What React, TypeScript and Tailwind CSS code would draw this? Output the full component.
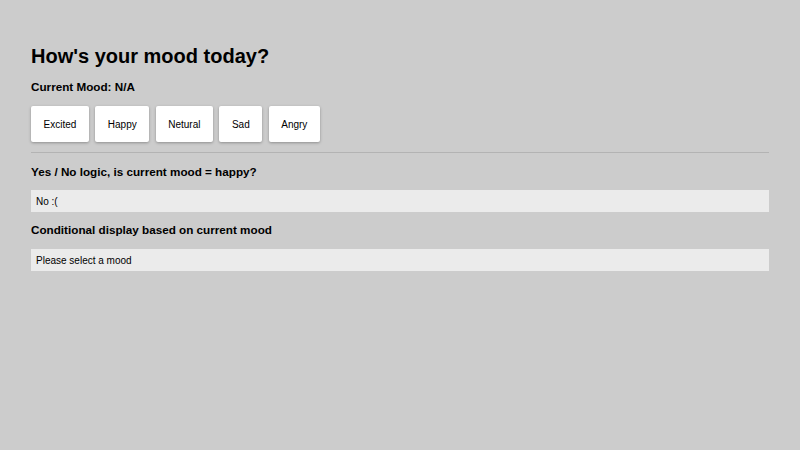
import React, { useState } from 'react';

const moods = ['Excited', 'Happy', 'Netural', 'Sad', 'Angry'];

function App() {
    const [mood, setMood] = useState<string | null>(null);

    return (
        <div className="min-h-screen bg-[#cccccc] px-[31px] pt-[43px] text-black font-['Liberation_Sans',Arial,sans-serif]">
            <h1 className="text-[20px] leading-[26px] font-bold">How's your mood today?</h1>

            <h3 className="mt-[10px] text-[11.7px] leading-4 font-bold">Current Mood: {mood ?? 'N/A'}</h3>

            <div className="mt-[11px] flex gap-[6.5px]">
                {moods.map((m) => (
                    <button
                        key={m}
                        onClick={() => setMood(m)}
                        className="h-9 px-[12.5px] bg-white rounded-[2px] text-[10px] shadow-[0_1px_3px_rgba(0,0,0,0.3)]"
                    >
                        {m}
                    </button>
                ))}
            </div>

            <hr className="mt-[10px] border-0 border-t border-[#b3b3b3]" />

            <h3 className="mt-[11px] text-[11.7px] leading-4 font-bold">Yes / No logic, is current mood = happy?</h3>
            <div className="mt-[10px] h-[22px] flex items-center px-[5px] bg-[#ebebeb] text-[10px]">
                {mood === 'Happy' ? 'Yes :)' : 'No :('}
            </div>

            <h3 className="mt-[10px] text-[11.7px] leading-4 font-bold">Conditional display based on current mood</h3>
            <div className="mt-[11px] h-[22px] flex items-center px-[5px] bg-[#ebebeb] text-[10px]">
                {mood ? `You are feeling ${mood.toLowerCase()}` : 'Please select a mood'}
            </div>
        </div>
    );
}

export default App;
